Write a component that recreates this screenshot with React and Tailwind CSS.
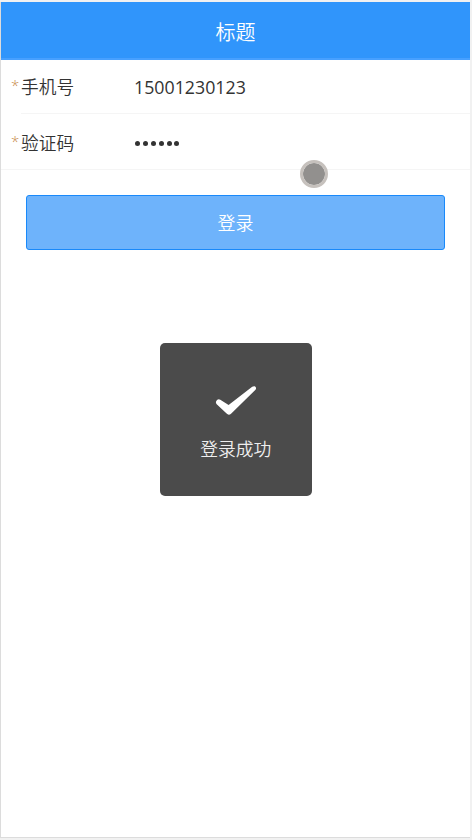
function Field({ label, children, lineClass }) {
  return (
    <div className="relative flex h-14 items-center pl-[10px]">
      <span className="w-[10px] self-start pt-[15px] font-['Open_Sans'] text-[15px] leading-6 text-[#c88a48]">*</span>
      <label className="w-[113px] pt-px text-[17.7px] text-[#333]">{label}</label>
      {children}
      <span className={`absolute bottom-0 right-0 h-px ${lineClass}`} />
    </div>
  );
}

export default function App() {
  return (
    <div className="h-[840px] w-[472px] bg-[#f1f1f1] pt-[2px] font-['Noto_Sans_CJK_SC',sans-serif] font-[350]">
      <main className="relative h-[836px] w-[470px] border-b border-l border-[#dcdcdc] bg-white">
        <header className="flex h-[58px] items-center justify-center border-b-2 border-[#47a0ff] bg-[#3095fb] pt-[3px] text-[20px] text-white">
          标题
        </header>
        <div className="-mt-[2px]">
          <Field label="手机号" lineClass="left-5 bg-[#f5f5f5]">
            <span className="pt-[3px] font-['Open_Sans'] text-[17.8px] font-normal text-[#333]">15001230123</span>
          </Field>
          <Field label="验证码" lineClass="left-0 bg-[#f5f5f5]">
            <div className="flex gap-[2.9px] pl-px pt-[3px]">
              {[0, 1, 2, 3, 4, 5].map((dot) => (
                <i key={dot} className="size-[5px] rounded-full bg-[#333]" />
              ))}
            </div>
          </Field>
        </div>
        <button className="ml-[25px] mt-[25px] flex h-[55px] w-[419px] items-center justify-center rounded-[3px] border border-[#1989fa] bg-[#6eb3fb] text-[18px] text-white">
          登录
        </button>
        <div className="absolute left-[299px] top-[158px] size-7 rounded-full border-3 border-[#c6c1bd] bg-[#92908e] bg-clip-padding" />
        <div className="absolute left-[158.5px] top-[341px] flex h-[153px] w-[152.5px] flex-col items-center rounded-[5px] bg-[#4b4b4b] text-white">
          <svg className="mt-[42px] h-[31px] w-[42px]" viewBox="0 0 42 31" fill="currentColor">
            <path d="M1.2 16.2C2.1 14.3 3.7 13.6 5.3 14.7L13.6 20.1L37.2 1.8C39.8 0 42.2 2.4 40.5 4.8L16.3 28.4C14.6 30 13 30 11.6 28.6L1.7 19.2C.8 18.2.7 17.2 1.2 16.2Z" />
          </svg>
          <span className="mt-[19px] text-[17.8px] leading-[26px] text-[#eee]">登录成功</span>
        </div>
      </main>
    </div>
  );
}
